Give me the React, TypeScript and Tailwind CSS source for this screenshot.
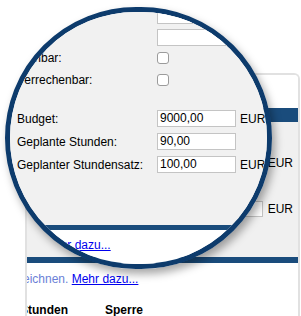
import React from "react";

const font = { fontFamily: '"Liberation Sans", Arial, sans-serif' };

function Field({ w, value }: { w: number; value?: string }) {
  return (
    <div
      className="h-[17px] border border-[#c4c4c4] bg-white pl-[2px] text-[12px] leading-[15px] text-black"
      style={{ width: w }}
    >
      {value}
    </div>
  );
}

function Check() {
  return <div className="h-[12px] w-[12px] rounded-[3px] border border-[#9b9b9b] bg-white" />;
}

function Magnified() {
  return (
    <div className="absolute left-[-10px] top-[-12px] w-[301px] text-[12px] leading-[14px] text-black">
      <div className="flex h-[225px] flex-col bg-[#f1f1f1] pl-[17px] pt-[7px]">
        <div className="flex items-center">
          <div className="w-[140px]" />
          <Field w={140} />
        </div>
        <div className="mt-[5px] flex items-center">
          <div className="w-[140px]" />
          <Field w={140} />
        </div>
        <div className="mt-[6px] flex h-[12px] items-center">
          <div className="w-[140px]">Planbar:</div>
          <Check />
        </div>
        <div className="mt-[10px] flex h-[12px] items-center">
          <div className="w-[140px]">Verrechenbar:</div>
          <Check />
        </div>
        <div className="mt-[24px] flex h-[17px] items-center">
          <div className="w-[140px]">Budget:</div>
          <Field w={79} value="9000,00" />
          <div className="ml-[4px]">EUR</div>
        </div>
        <div className="mt-[6px] flex h-[17px] items-center">
          <div className="w-[140px]">Geplante Stunden:</div>
          <Field w={79} value="90,00" />
        </div>
        <div className="mt-[6px] flex h-[17px] items-center">
          <div className="w-[140px]">Geplanter Stundensatz:</div>
          <Field w={79} value="100,00" />
          <div className="ml-[4px]">EUR</div>
        </div>
      </div>
      <div className="h-[5px] bg-[#1a4c7c]" />
      <div className="h-[100px] bg-white pl-[44px] pt-[8px]">
        <span className="text-[#0000ee] underline">Mehr dazu...</span>
      </div>
    </div>
  );
}

export default function App() {
  return (
    <div className="relative h-[316px] w-[301px] overflow-hidden bg-white" style={font}>
      <div className="ml-[25px] mt-[73px] h-[243px] w-[275px] overflow-hidden rounded-tr-[6px] border-2 border-b-0 border-[#e1e1e1] text-[12px] leading-[14px] text-black">
        <div className="h-[33px] bg-white" />
        <div className="h-[14px] bg-[#1a4c7c]" />
        <div className="flex h-[135px] flex-col bg-[#f0f0f0] pr-[5px] pt-[34px]">
          <div className="flex justify-end">EUR</div>
          <div className="mt-[31px] flex items-center justify-end">
            <div className="h-[16px] w-[60px] border border-[#c4c4c4] bg-white" />
            <div className="ml-[5px]">EUR</div>
          </div>
        </div>
        <div className="h-[6px] bg-[#1a4c7c]" />
        <div className="ml-[-10px] pt-[9px]">
          <span className="text-[#6b7fd7]">zeichnen. </span>
          <span className="text-[#0000ee] underline">Mehr dazu...</span>
        </div>
        <div className="ml-[-7px] mt-[17px] flex font-bold">
          <div className="w-[85px]">Stunden</div>
          <div>Sperre</div>
        </div>
      </div>

      <div className="absolute left-[5px] top-[7px] h-[262px] w-[267px] overflow-hidden rounded-full border-[5px] border-[#0d3b6c] shadow-[3px_5px_9px_rgba(0,0,0,0.35)]">
        <Magnified />
      </div>
    </div>
  );
}
